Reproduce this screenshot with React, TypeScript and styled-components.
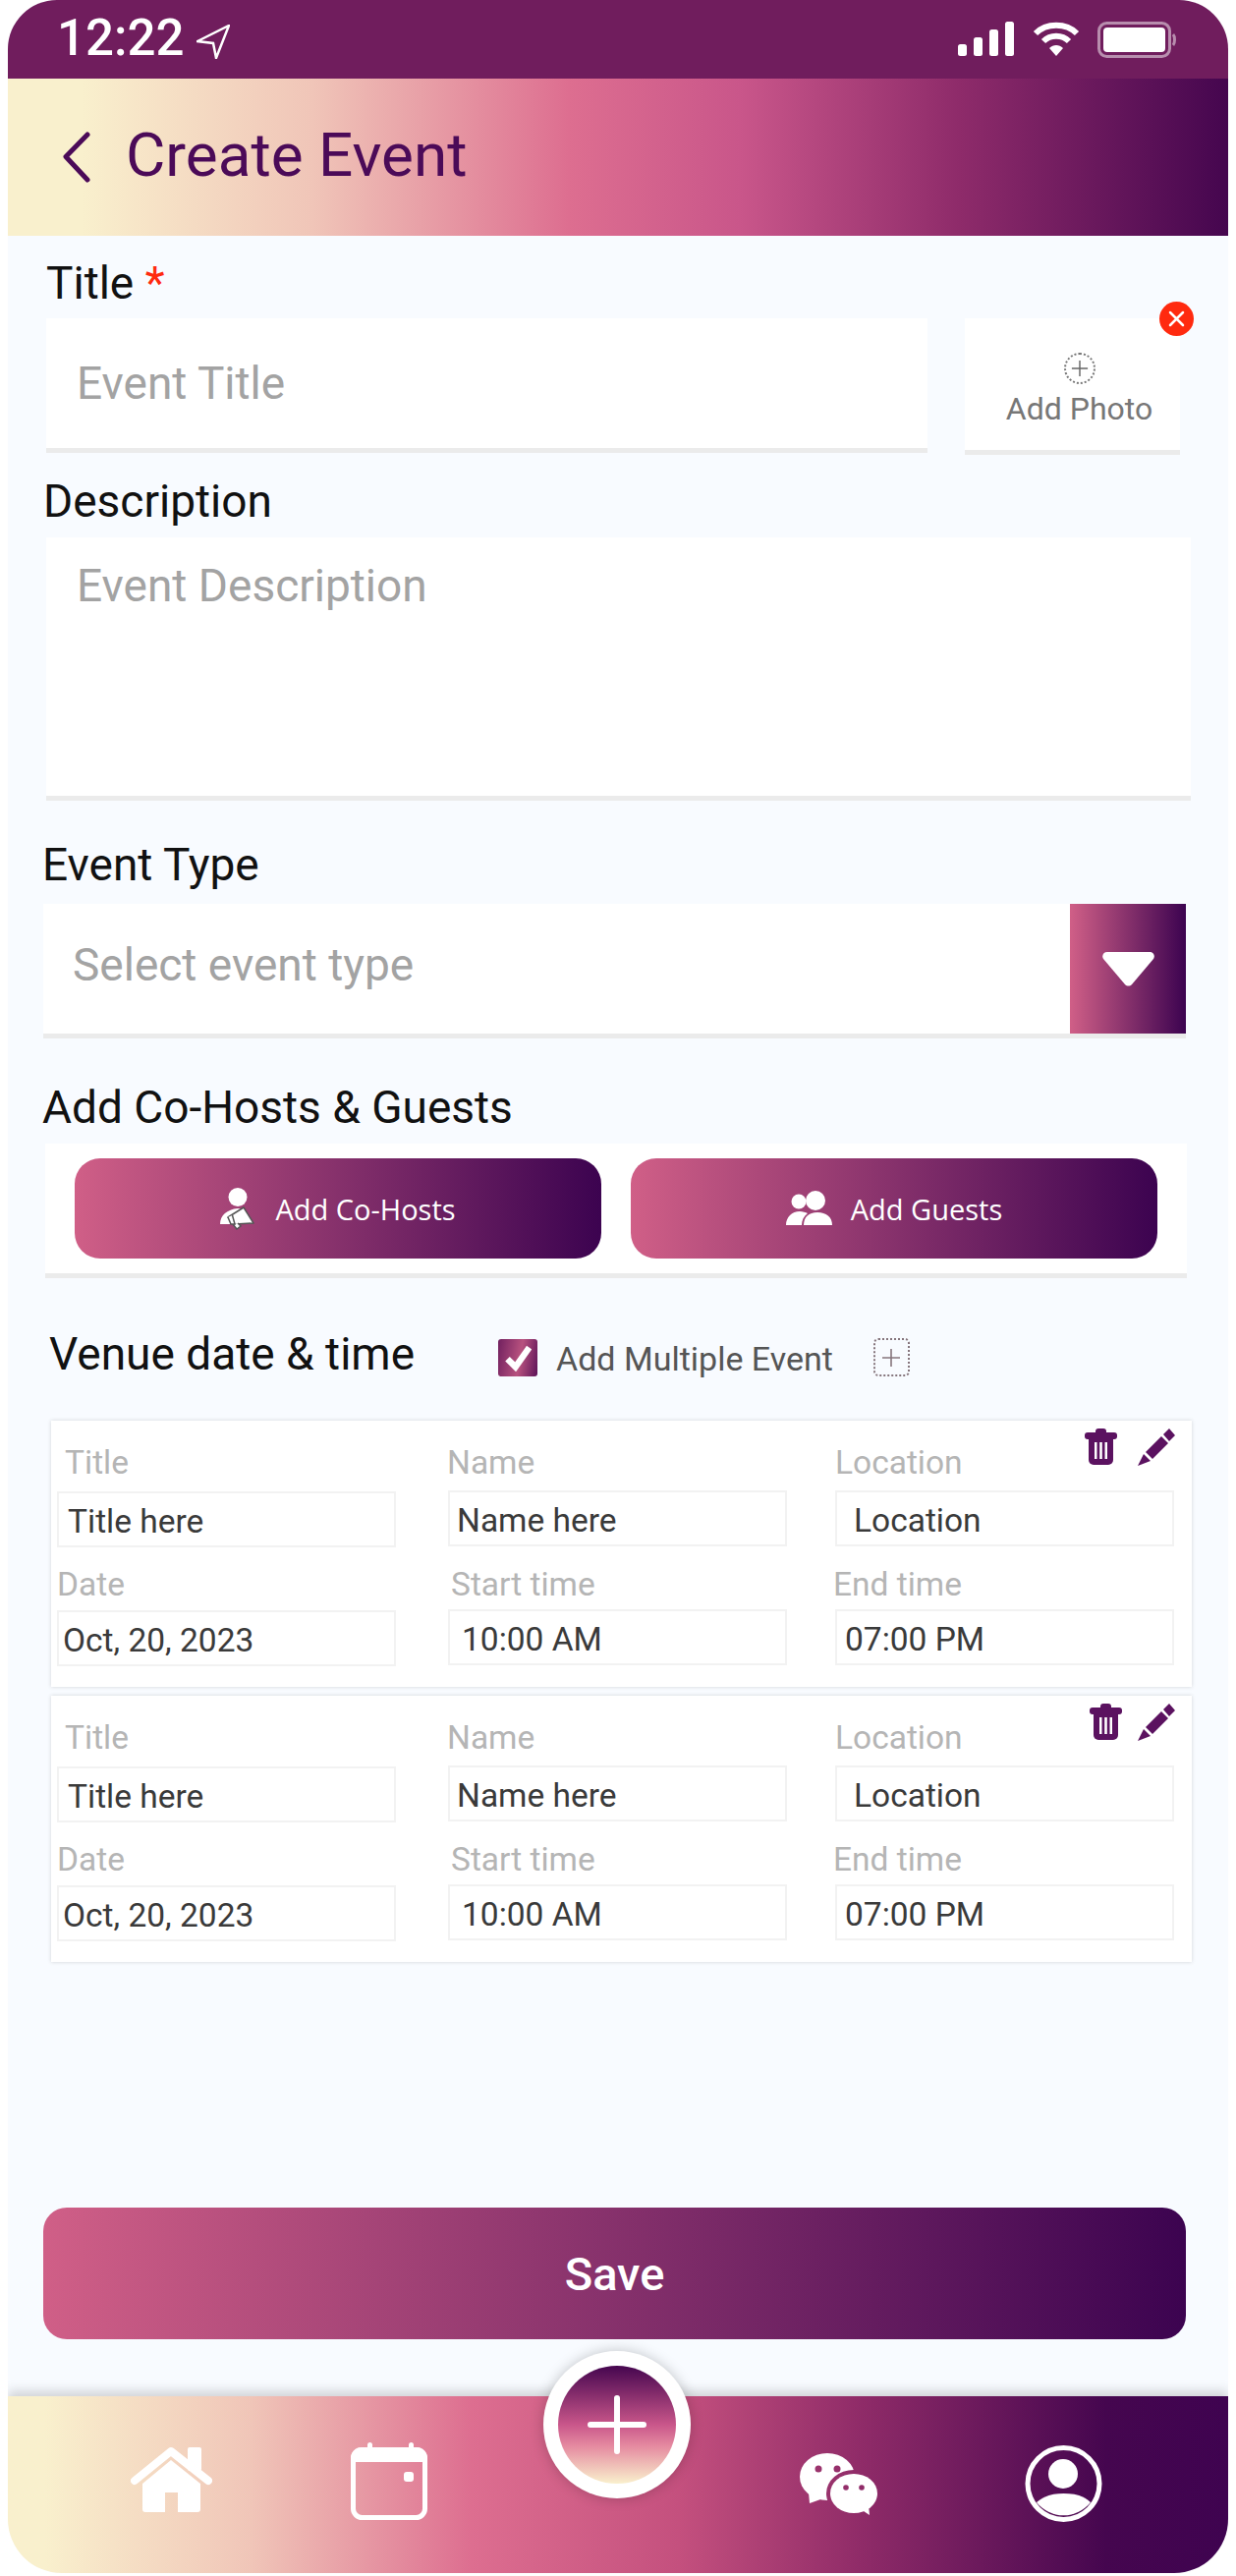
import styled, { createGlobalStyle } from 'styled-components'

const GlobalStyle = createGlobalStyle`
  html, body {
    margin: 0;
    padding: 0;
    background: #fff;
  }
  * {
    box-sizing: border-box;
  }
`

const Frame = styled.div`
  width: 1242px;
  height: 2619px;
  margin: 0 8px;
  background: #f8fbff;
  border-radius: 50px 50px 55px 55px;
  overflow: hidden;
  display: flex;
  flex-direction: column;
  font-family: Roboto, sans-serif;
  color: #111;
`
const StatusBar = styled.div`
  height: 80px;
  flex: none;
  background: #701d5d;
  color: #fff;
  display: flex;
  align-items: flex-start;
  padding: 11px 53px 0 50px;
`
const Clock = styled.span`
  font-size: 51px;
  font-weight: 500;
  line-height: 56px;
`
const StatusIcons = styled.div`
  margin-left: auto;
  display: flex;
  gap: 18px;
  padding-top: 11px;
`
const Header = styled.div`
  height: 160px;
  flex: none;
  display: flex;
  align-items: center;
  gap: 36px;
  padding: 0 0 5px 56px;
  background: linear-gradient(90deg, #f9f0cd 6%, #f0c5b8 25%, #dd6e90 46%, #c9568a 60%, #8e2b6a 78%, #45064f 100%);
`
const HeaderTitle = styled.h1`
  margin: 0;
  font-size: 62px;
  font-weight: 400;
  line-height: 70px;
  color: #4b0a58;
`
const Main = styled.div`
  flex: 1;
  display: flex;
  flex-direction: column;
`
const Label = styled.div<{ $left: number; $top: number }>`
  margin: ${(p) => p.$top}px 0 0 ${(p) => p.$left}px;
  font-size: 46px;
  line-height: 48px;
  color: #111;
`
const Star = styled.span`
  color: #ff2a0f;
`
const TitleRow = styled.div`
  display: flex;
  gap: 38px;
  margin: 12px 0 0 39px;
`
const Box = styled.div<{ $width: number; $height: number; $left?: number; $top?: number; $pad?: number }>`
  width: ${(p) => p.$width}px;
  height: ${(p) => p.$height}px;
  margin: ${(p) => p.$top ?? 0}px 0 0 ${(p) => p.$left ?? 0}px;
  padding-left: ${(p) => p.$pad ?? 31}px;
  background: #fff;
  border-bottom: 5px solid #ebebeb;
  display: flex;
  align-items: center;
  flex: none;
`
const Placeholder = styled.span<{ $alignTop?: boolean; $raise?: number }>`
  font-size: 46px;
  line-height: 52px;
  color: #a3a3a3;
  align-self: ${(p) => (p.$alignTop ? 'flex-start' : 'center')};
  margin-top: ${(p) => (p.$alignTop ? '23px' : '0')};
  margin-bottom: ${(p) => p.$raise ?? 0}px;
`
const PhotoBox = styled.div`
  position: relative;
  width: 219px;
  height: 139px;
  background: #fff;
  border-bottom: 5px solid #ebebeb;
  display: flex;
  flex-direction: column;
  align-items: center;
  padding: 35px 0 0 14px;
  gap: 6px;
  flex: none;
`
const PhotoPlus = styled.div`
  width: 32px;
  height: 32px;
  border: 2px dotted #777;
  border-radius: 50%;
  display: flex;
  align-items: center;
  justify-content: center;
  color: #666;
`
const PhotoText = styled.span`
  font-size: 32px;
  line-height: 38px;
  color: #777;
`
const RemoveBadge = styled.div`
  position: absolute;
  top: -17px;
  right: -14px;
  width: 35px;
  height: 35px;
  border-radius: 50%;
  background: #ff2a0f;
  display: flex;
  align-items: center;
  justify-content: center;
`
const SelectArrow = styled.div`
  margin-left: auto;
  width: 118px;
  height: 132px;
  flex: none;
  background: linear-gradient(90deg, #d05f87, #3c0350);
  display: flex;
  align-items: center;
  justify-content: center;
`
const HostPanel = styled.div`
  width: 1162px;
  height: 137px;
  margin: 13px 0 0 38px;
  padding: 15px 30px 0;
  background: #fff;
  border-bottom: 5px solid #ebebeb;
  display: flex;
  gap: 30px;
  flex: none;
`
const HostButton = styled.div`
  flex: 1;
  height: 102px;
  border-radius: 26px;
  background: linear-gradient(90deg, #d05f87, #3c0350);
  display: flex;
  align-items: center;
  justify-content: center;
  gap: 19px;
  color: #fff;
  font-family: 'Open Sans', sans-serif;
  font-size: 29px;
`
const VenueRow = styled.div`
  display: flex;
  align-items: center;
  height: 48px;
  margin: 53px 0 0 42px;
`
const VenueTitle = styled.span`
  font-size: 46px;
  line-height: 48px;
  width: 457px;
  flex: none;
`
const Check = styled.div`
  width: 40px;
  height: 38px;
  margin-top: 7px;
  border-radius: 3px;
  background: linear-gradient(100deg, #71205f, #b8527f 55%, #5d1258);
  display: flex;
  align-items: center;
  justify-content: center;
`
const CheckText = styled.span`
  margin: 9px 0 0 19px;
  font-size: 34px;
  color: #555;
`
const DottedPlus = styled.div`
  width: 37px;
  height: 39px;
  margin: 7px 0 0 41px;
  border: 2px dotted #85757c;
  border-radius: 5px;
  display: flex;
  align-items: center;
  justify-content: center;
`
const Cards = styled.div`
  display: flex;
  flex-direction: column;
  gap: 9px;
  margin: 44px 0 0 44px;
`
const Card = styled.div`
  position: relative;
  width: 1161px;
  height: 271px;
  background: #fff;
  box-shadow: 0 0 4px rgba(0, 0, 0, 0.16);
  display: flex;
  padding: 23px 0 0 6px;
`
const Column = styled.div<{ $gap: number }>`
  width: 345px;
  flex: none;
  margin-right: ${(p) => p.$gap}px;
`
const FieldLabel = styled.div<{ $indent: number; $top: number }>`
  margin: ${(p) => p.$top}px 0 0 ${(p) => p.$indent}px;
  font-size: 33.5px;
  line-height: 40px;
  color: #b5b5b5;
`
const FieldValue = styled.div<{ $pad: number; $top: number }>`
  height: 57px;
  margin-top: ${(p) => p.$top}px;
  padding: 3px 0 0 ${(p) => p.$pad}px;
  border: 2px solid #f2f2f2;
  display: flex;
  align-items: center;
  font-size: 33.5px;
  color: #3a3a3a;
`
const CardActions = styled.div<{ $gap: number }>`
  position: absolute;
  top: 8px;
  right: 17px;
  display: flex;
  gap: ${(p) => p.$gap}px;
`
const SaveButton = styled.div`
  width: 1163px;
  height: 134px;
  margin: auto 0 58px 36px;
  flex: none;
  border-radius: 24px;
  background: linear-gradient(90deg, #d05f87, #3c0350);
  display: flex;
  align-items: center;
  justify-content: center;
  color: #fff;
  font-size: 47px;
  font-weight: 500;
`
const BottomBar = styled.div`
  position: relative;
  height: 180px;
  flex: none;
  display: flex;
  align-items: flex-start;
  padding-left: 125px;
  background: linear-gradient(90deg, #f9f0cd 3%, #f0c5b8 20%, #dd6e90 38%, #c4507e 55%, #8f2b68 70%, #45064f 90%, #3f0350 100%);
  box-shadow: 0 -6px 10px rgba(0, 0, 0, 0.15);
`
const NavSlot = styled.div<{ $left: number; $top: number }>`
  margin: ${(p) => p.$top}px 0 0 ${(p) => p.$left}px;
  display: flex;
`
const Fab = styled.div`
  position: absolute;
  top: -46px;
  left: 545px;
  width: 150px;
  height: 150px;
  padding: 15px;
  border-radius: 50%;
  background: #fff;
  box-shadow: 0 0 14px rgba(0, 0, 0, 0.22);
`
const FabInner = styled.div`
  width: 100%;
  height: 100%;
  border-radius: 50%;
  background: linear-gradient(180deg, #45064f 0%, #c9568a 50%, #e58aa0 68%, #f9f0cd 100%);
  display: flex;
  align-items: center;
  justify-content: center;
`

const NavArrow = () => (
  <svg width="34" height="35" viewBox="0 0 34 35" style={{ marginLeft: 13, marginTop: 14 }}>
    <path d="M1 17 L33 1 L20 34 L17 19 Z" fill="none" stroke="#fff" strokeWidth="2.5" strokeLinejoin="miter" />
  </svg>
)
const Signal = () => (
  <svg width="58" height="35" viewBox="0 0 58 35" fill="#fff">
    <rect x="0" y="23" width="9" height="12" rx="2.5" />
    <rect x="16" y="16" width="9" height="19" rx="2.5" />
    <rect x="32" y="8" width="9" height="27" rx="2.5" />
    <rect x="48" y="0" width="9" height="35" rx="2.5" />
  </svg>
)
const Wifi = () => (
  <svg width="48" height="35" viewBox="0 0 48 35" fill="none" stroke="#fff" strokeWidth="6">
    <path d="M3 12 C14 1 34 1 45 12" />
    <path d="M11 20 C18 13 30 13 37 20" />
    <path d="M17 27 L24 35 L31 27 C27 23 21 23 17 27 Z" fill="#fff" strokeWidth="0" />
  </svg>
)
const Battery = () => (
  <svg width="80" height="37" viewBox="0 0 80 37" fill="none">
    <rect x="1.5" y="1.5" width="72" height="34" rx="8" stroke="#fff" strokeOpacity="0.5" strokeWidth="3" />
    <rect x="6" y="6" width="63" height="25" rx="4" fill="#fff" />
    <path d="M77 13 C79 15 79 22 77 24" stroke="#fff" strokeOpacity="0.5" strokeWidth="3" />
  </svg>
)
const BackChevron = () => (
  <svg width="28" height="52" viewBox="0 0 28 52" fill="none" style={{ marginTop: 5 }}>
    <path d="M25 3 L3 25.5 L25 49" stroke="#4b0a58" strokeWidth="5" strokeLinecap="round" strokeLinejoin="round" />
  </svg>
)
const SmallPlus = ({ size, color }: { size: number; color: string }) => (
  <svg width={size} height={size} viewBox="0 0 20 20" stroke={color} strokeWidth="1.6">
    <path d="M10 1 V19 M1 10 H19" />
  </svg>
)
const CoHostIcon = () => (
  <svg width="37" height="43" viewBox="0 0 37 43">
    <circle cx="18" cy="9.5" r="9.5" fill="#fff" />
    <path d="M0 37 C0 28 7 22 18 21 C24 21 27 24 28 28 L24 37 Z" fill="#fff" />
    <path d="M8 30 L24 20 L34 36 L15 37 Z" fill="#fff" stroke="#555" strokeWidth="1.5" strokeLinejoin="round" />
    <path d="M8 30 L11 37 L15 37 L12.5 28 M13 37 L17 42 L21 39 L18 36" fill="#fff" stroke="#555" strokeWidth="1.5" />
  </svg>
)
const GuestsIcon = () => (
  <svg width="47" height="36" viewBox="0 0 47 36" fill="#fff">
    <circle cx="13" cy="11" r="7.5" />
    <circle cx="30" cy="10" r="10" />
    <path d="M0 35 C0 27 6 21 14 21 C17 21 20 22 22 23 C18 26 16 30 16 35 Z" />
    <path d="M18 35 C18 27 23 22 32 22 C41 22 47 27 47 35 Z" />
  </svg>
)
const TrashIcon = () => (
  <svg width="33" height="38" viewBox="0 0 33 38" fill="#5b1260">
    <rect x="11" y="0" width="11" height="7" rx="3" />
    <rect x="0" y="4" width="33" height="7" rx="3" />
    <path d="M4 11 H29 V32 A5 5 0 0 1 24 37 H9 A5 5 0 0 1 4 32 Z" />
    <path d="M10 14 H12.5 V31 H10 Z M15.2 14 H17.8 V31 H15.2 Z M20.5 14 H23 V31 H20.5 Z" fill="#fff" />
  </svg>
)
const PenIcon = () => (
  <svg width="39" height="38" viewBox="0 0 39 38" fill="#5b1260">
    <path d="M27 6 L33 0 L39 7 L33 13 Z" />
    <path d="M25 8 L32 15 L16 31 L9 24 Z" />
    <path d="M7 26 L14 33 L1 38 Z" />
  </svg>
)
const CloseIcon = () => (
  <svg width="17" height="17" viewBox="0 0 17 17" stroke="#fff" strokeWidth="2.5" strokeLinecap="round">
    <path d="M2 2 L15 15 M15 2 L2 15" />
  </svg>
)
const CaretIcon = () => (
  <svg width="53" height="35" viewBox="0 0 53 35" fill="#fff">
    <path d="M5 0 H48 C52 0 54 4 52 7 L30 33 C28 35 25 35 23 33 L1 7 C-1 4 1 0 5 0 Z" />
  </svg>
)
const CheckIcon = () => (
  <svg width="28" height="28" viewBox="0 0 24 24" fill="none" stroke="#fff" strokeWidth="5.5">
    <path d="M3 13 L10 20 L22 3" />
  </svg>
)
const HomeIcon = () => (
  <svg width="83" height="67" viewBox="0 0 83 67" fill="#fff">
    <rect x="58" y="1" width="14" height="24" rx="2" />
    <path d="M4 35 L41 5 L79 35" fill="none" stroke="#fff" strokeWidth="8" strokeLinecap="round" strokeLinejoin="round" />
    <path d="M12 38 L41 14 L71 38 V64 A3 3 0 0 1 68 67 H48 V47 H35 V67 H15 A3 3 0 0 1 12 64 Z" />
  </svg>
)
const CalendarIcon = () => (
  <svg width="78" height="79" viewBox="0 0 78 79" fill="#fff">
    <rect x="17" y="0" width="5" height="10" rx="2.5" />
    <rect x="59" y="0" width="5" height="10" rx="2.5" />
    <rect x="2.5" y="7.5" width="73" height="69" rx="9" fill="none" stroke="#fff" strokeWidth="5" />
    <path d="M11 5 H67 A11 11 0 0 1 78 16 V20 H0 V16 A11 11 0 0 1 11 5 Z" />
    <rect x="54" y="30" width="10" height="10" rx="3" />
  </svg>
)
const ChatIcon = () => (
  <svg width="79" height="63" viewBox="0 0 79 63">
    <mask id="chat-cut">
      <rect width="79" height="63" fill="#fff" />
      <ellipse cx="55" cy="41" rx="28" ry="24" fill="#000" />
      <circle cx="19" cy="16" r="3.5" fill="#000" />
      <circle cx="38" cy="16" r="3.5" fill="#000" />
    </mask>
    <mask id="chat-dots">
      <rect width="79" height="63" fill="#fff" />
      <circle cx="47" cy="35" r="2.8" fill="#000" />
      <circle cx="63" cy="35" r="2.8" fill="#000" />
    </mask>
    <g mask="url(#chat-cut)" fill="#fff">
      <ellipse cx="28" cy="24" rx="28" ry="24" />
      <path d="M9 40 L10 51 L24 46 Z" />
    </g>
    <g mask="url(#chat-dots)" fill="#fff">
      <ellipse cx="55" cy="41" rx="24" ry="20" />
      <path d="M62 57 L71 63 L70 53 Z" />
    </g>
  </svg>
)
const ProfileIcon = () => (
  <svg width="79" height="78" viewBox="0 0 79 78" fill="#fff">
    <circle cx="39.5" cy="39" r="36.5" fill="none" stroke="#fff" strokeWidth="5" />
    <circle cx="39" cy="29" r="15" />
    <path d="M12 58 C20 51 30 49 39.5 49 C50 49 60 51 67 58 A35 35 0 0 1 12 58 Z" />
  </svg>
)
const FabPlus = () => (
  <svg width="60" height="60" viewBox="0 0 60 60" stroke="#fff" strokeWidth="6" strokeLinecap="round">
    <path d="M30 3 V57 M3 30 H57" />
  </svg>
)

type Field = { label: string; indent: number; value: string; pad: number }

const columns: { gap: number; lift: number; fields: [Field, Field] }[] = [
  {
    gap: 53,
    lift: 0,
    fields: [
      { label: 'Title', indent: 8, value: 'Title here', pad: 9 },
      { label: 'Date', indent: 0, value: 'Oct, 20, 2023', pad: 4 },
    ],
  },
  {
    gap: 49,
    lift: 1,
    fields: [
      { label: 'Name', indent: -1, value: 'Name here', pad: 7 },
      { label: 'Start time', indent: 3, value: '10:00 AM', pad: 12 },
    ],
  },
  {
    gap: 0,
    lift: 1,
    fields: [
      { label: 'Location', indent: 0, value: 'Location', pad: 17 },
      { label: 'End time', indent: -2, value: '07:00 PM', pad: 8 },
    ],
  },
]

const VenueCard = ({ actionGap }: { actionGap: number }) => (
  <Card>
    {columns.map((col) => (
      <Column key={col.fields[0].label} $gap={col.gap}>
        <FieldLabel $indent={col.fields[0].indent} $top={0}>{col.fields[0].label}</FieldLabel>
        <FieldValue $pad={col.fields[0].pad} $top={9 - col.lift}>{col.fields[0].value}</FieldValue>
        <FieldLabel $indent={col.fields[1].indent} $top={18 + col.lift}>{col.fields[1].label}</FieldLabel>
        <FieldValue $pad={col.fields[1].pad} $top={6 - col.lift}>{col.fields[1].value}</FieldValue>
      </Column>
    ))}
    <CardActions $gap={actionGap}>
      <TrashIcon />
      <PenIcon />
    </CardActions>
  </Card>
)

export default function App() {
  return (
    <>
      <GlobalStyle />
      <Frame>
        <StatusBar>
          <Clock>12:22</Clock>
          <NavArrow />
          <StatusIcons>
            <Signal />
            <Wifi />
            <Battery />
          </StatusIcons>
        </StatusBar>
        <Header>
          <BackChevron />
          <HeaderTitle>Create Event</HeaderTitle>
        </Header>
        <Main>
          <Label $left={39} $top={24}>Title <Star>*</Star></Label>
          <TitleRow>
            <Box $width={897} $height={137}>
              <Placeholder>Event Title</Placeholder>
            </Box>
            <PhotoBox>
              <PhotoPlus>
                <SmallPlus size={18} color="#666" />
              </PhotoPlus>
              <PhotoText>Add Photo</PhotoText>
              <RemoveBadge>
                <CloseIcon />
              </RemoveBadge>
            </PhotoBox>
          </TitleRow>
          <Label $left={36} $top={23}>Description</Label>
          <Box $width={1165} $height={268} $left={39} $top={13}>
            <Placeholder $alignTop>Event Description</Placeholder>
          </Box>
          <Label $left={35} $top={41}>Event Type</Label>
          <Box $width={1163} $height={137} $left={36} $top={16} $pad={30}>
            <Placeholder $raise={8}>Select event type</Placeholder>
            <SelectArrow>
              <CaretIcon />
            </SelectArrow>
          </Box>
          <Label $left={35} $top={46}>Add Co-Hosts &amp; Guests</Label>
          <HostPanel>
            <HostButton>
              <CoHostIcon />
              <span>Add Co-Hosts</span>
            </HostButton>
            <HostButton>
              <GuestsIcon />
              <span>Add Guests</span>
            </HostButton>
          </HostPanel>
          <VenueRow>
            <VenueTitle>Venue date &amp; time</VenueTitle>
            <Check>
              <CheckIcon />
            </Check>
            <CheckText>Add Multiple Event</CheckText>
            <DottedPlus>
              <SmallPlus size={20} color="#85757c" />
            </DottedPlus>
          </VenueRow>
          <Cards>
            <VenueCard actionGap={20} />
            <VenueCard actionGap={15} />
          </Cards>
          <SaveButton>Save</SaveButton>
        </Main>
        <BottomBar>
          <NavSlot $left={0} $top={51}><HomeIcon /></NavSlot>
          <NavSlot $left={141} $top={47}><CalendarIcon /></NavSlot>
          <NavSlot $left={379} $top={58}><ChatIcon /></NavSlot>
          <NavSlot $left={150} $top={50}><ProfileIcon /></NavSlot>
          <Fab>
            <FabInner>
              <FabPlus />
            </FabInner>
          </Fab>
        </BottomBar>
      </Frame>
    </>
  )
}
